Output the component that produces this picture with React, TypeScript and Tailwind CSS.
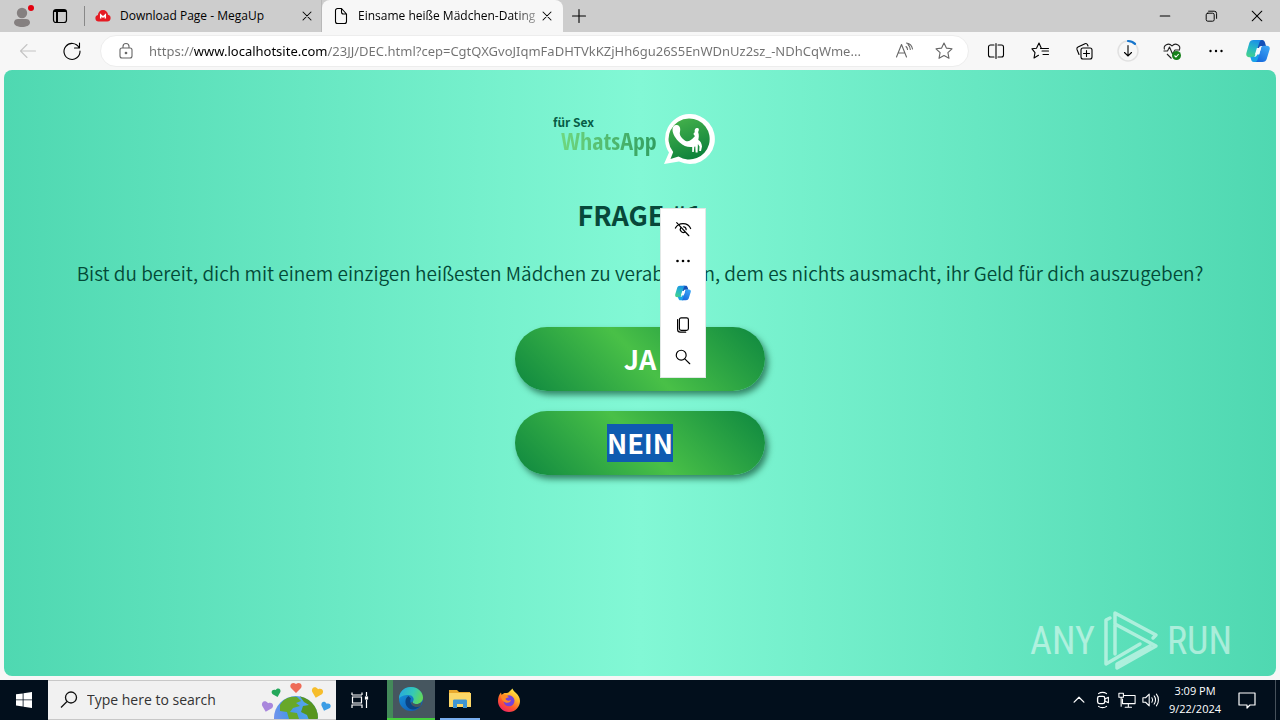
import type { ReactNode } from "react";

const UI_FONT = "font-['Open_Sans','Noto_Sans',sans-serif]";
const PAGE_FONT = "font-['Noto_Sans_CJK_SC','Noto_Sans',sans-serif]";
const NARROW_FONT = "font-['Open_Sans_Condensed','Roboto_Condensed','Liberation_Sans_Narrow',sans-serif]";
const LIGHT_NARROW_FONT = "font-['Roboto_Condensed','Liberation_Sans_Narrow','Open_Sans_Condensed',sans-serif]";

function Line({ size = 20, children, className = "" }: { size?: number; children: ReactNode; className?: string }) {
  return (
    <svg
      width={size}
      height={size}
      viewBox="0 0 20 20"
      fill="none"
      stroke="currentColor"
      strokeWidth="1.1"
      strokeLinecap="round"
      strokeLinejoin="round"
      className={`shrink-0 ${className}`}
      aria-hidden="true"
    >
      {children}
    </svg>
  );
}

function CopilotIcon({ size, id }: { size: number; id: string }) {
  return (
    <svg width={size} height={size} viewBox="0 0 24 24" aria-hidden="true" className="shrink-0">
      <defs>
        <linearGradient id={`${id}a`} x1="0.6" y1="0" x2="0.3" y2="1">
          <stop offset="0" stopColor="#1b8fe8" />
          <stop offset="0.5" stopColor="#27b9c4" />
          <stop offset="1" stopColor="#45d18c" />
        </linearGradient>
        <linearGradient id={`${id}b`} x1="0.8" y1="0" x2="0.2" y2="1">
          <stop offset="0" stopColor="#3ba5f5" />
          <stop offset="1" stopColor="#1668dc" />
        </linearGradient>
      </defs>
      <path d="M13 1h3.300c1.400 0 2.200 1 2.600 2.300L20 7h-4.800c-1.200 0-1.900.8-2.300 1.900L12 12 10.200 4C10.600 2 11.500 1 13 1z" fill="#1450b8" />
      <path d="M7.500 1H16c-1.400 0-2.100 1-2.600 2.500L9.300 16c-.5 1.500-1.200 2.200-2.700 2.200H3.300C.8 18.200-.2 16.300.4 14L3.300 4C3.900 2 5.300 1 7.500 1z" fill={`url(#${id}a)`} />
      <path d="M11 23H7.800c-1.400 0-2.200-1-2.600-2.300L4.300 17.800h4.300c1.200 0 2-.8 2.400-1.900L12 12l2.400 7.600C13.700 22 12.700 23 11 23z" fill="#1aa3e8" />
      <path d="M16.500 23H9c1.400 0 2.100-1 2.600-2.500L15.200 8.600c.4-1.200 1.100-1.900 2.500-1.900h3c2.500 0 3.500 1.600 2.900 3.900L20.700 20c-.6 2-2 3-4.200 3z" fill={`url(#${id}b)`} />
      <path d="M10.900 8.900h4.200l-2 6.500H8.900z" fill="#f7fbff" />
    </svg>
  );
}

function TabStrip() {
  return (
    <header className="flex h-8 items-stretch bg-[#cdcdcd] text-black">
      <div className="flex w-[84px] items-center gap-[26px] pl-3">
        <button aria-label="Profile" className="shrink-0">
          <svg width="22" height="24" viewBox="0 0 22 24" aria-hidden="true">
            <circle cx="10" cy="9" r="5.200" fill="#858080" />
            <path d="M2 18.500c0-2.500 2-3.500 4-3.500h8c2 0 4 1 4 3.500 0 3-4 4.500-8 4.500s-8-1.500-8-4.500z" fill="#858080" />
            <circle cx="19" cy="4" r="3" fill="#e3000f" />
          </svg>
        </button>
        <button aria-label="Tab actions" className="-ml-2 shrink-0">
          <svg width="16" height="16" viewBox="0 0 16 16" fill="none" stroke="#000" aria-hidden="true">
            <rect x="1.500" y="1.500" width="13" height="13" rx="2.500" strokeWidth="1.200" />
            <path d="M2 3h12M5 4v10" strokeWidth="2" />
          </svg>
        </button>
      </div>
      <div className="flex w-[238px] items-center border-r border-[#b8b8b8] pr-[6px]">
        <span className="mr-[10px] h-5 w-px bg-[#888]" />
        <svg width="16" height="14" viewBox="0 0 16 14" aria-hidden="true">
          <path d="M3.500 12.500a3.300 3.300 0 0 1-.6-6.500A5 5 0 0 1 8 1a5 5 0 0 1 5 4.800 3.400 3.400 0 0 1-.7 6.700z" fill="#e51b23" />
          <path d="M5.700 9.500V6l2.300 2 2.300-2v3.500" stroke="#fff" strokeWidth="1.500" fill="none" />
        </svg>
        <span className="ml-[9px] flex-1 truncate text-[12px] leading-4">Download Page - MegaUp</span>
        <button aria-label="Close Download Page">
          <Line size={16}><path d="m5 5 10 10M15 5 5 15" strokeWidth="1.300" /></Line>
        </button>
      </div>
      <div className="flex w-[241px] items-center rounded-t-lg bg-[#f7f7f7] pr-2 pl-3">
        <svg width="14" height="18" viewBox="0 0 14 18" fill="none" stroke="#000" strokeWidth="1.100" strokeLinejoin="round" aria-hidden="true" className="shrink-0">
          <path d="M1.500 3.500a2 2 0 0 1 2-2h4L12.500 7v7.500a2 2 0 0 1-2 2h-7a2 2 0 0 1-2-2zM7.500 1.500V5a2 2 0 0 0 2 2h3" />
        </svg>
        <span className="ml-[10px] bg-[linear-gradient(90deg,#000_155px,#999_176px)] bg-clip-text text-[12px] leading-4 whitespace-nowrap text-transparent">
          Einsame heiße Mädchen-Dating
        </span>
        <button aria-label="Close Einsame heiße Mädchen-Dating" className="ml-auto">
          <Line size={16}><path d="m5 5 10 10M15 5 5 15" strokeWidth="1.300" /></Line>
        </button>
      </div>
      <button aria-label="New tab" className="flex w-8 items-center justify-center">
        <Line size={20}><path d="M10 3.500v13M3.500 10h13" /></Line>
      </button>
      <div className="ml-auto flex">
        <button aria-label="Minimize" className="flex w-[46px] items-center justify-center"><Line size={16}><path d="M4 10h12" strokeWidth="1.300" /></Line></button>
        <button aria-label="Restore" className="flex w-[46px] items-center justify-center">
          <Line size={16}><rect x="4" y="6.500" width="10" height="10" rx="2" strokeWidth="1.200" /><path d="M7 4h7a3 3 0 0 1 3 3v6" strokeWidth="1.200" /></Line>
        </button>
        <button aria-label="Close" className="flex w-[46px] items-center justify-center"><Line size={16}><path d="m4 4 12 12M16 4 4 16" strokeWidth="1.300" /></Line></button>
      </div>
    </header>
  );
}

function Toolbar() {
  return (
    <nav className="flex h-[38px] items-center bg-[#f7f7f7] text-black">
      <button aria-label="Back" className="flex w-14 justify-center text-[#c4c4c4]">
        <Line><path d="M17.500 10h-15M9 3.500 2.500 10 9 16.500" /></Line>
      </button>
      <button aria-label="Refresh" className="flex w-8 justify-center">
        <Line><path d="M17 6.500A8 8 0 1 0 18 10M17.500 2v5h-5" /></Line>
      </button>
      <div className="ml-3 flex h-8 min-w-0 flex-1 items-center rounded-full border border-[#ededed] bg-white pr-[14px] pl-4">
        <svg width="18" height="18" viewBox="0 0 18 18" fill="none" stroke="#666" strokeWidth="1.100" aria-hidden="true" className="shrink-0">
          <rect x="3" y="6" width="12" height="10" rx="2" />
          <path d="M6 6V4.500a3 3 0 0 1 6 0V6" />
          <circle cx="9" cy="11" r=".8" fill="#666" />
        </svg>
        <input
          aria-label="Address"
          readOnly
          value="https://www.localhotsite.com/23JJ/DEC.html?cep=CgtQXGvoJIqmFaDHTVkKZjHh6gu26S5EnWDnUz2sz_-NDhCqWme..."
          className="ml-[14px] min-w-0 flex-1 bg-[linear-gradient(90deg,#717171_45px,#000_45px,#000_178px,#717171_178px)] bg-clip-text font-['Noto_Sans','Open_Sans',sans-serif] text-[13px] leading-5 text-transparent outline-none"
        />
        <button aria-label="Read aloud" className="mr-5 ml-3 text-[#666]">
          <Line><path d="M2.500 16 7.500 3.500 12.500 16M4.300 12h6.500M12 5.500c1 .8 1.500 1.800 1.500 3M14 3.500c1.500 1.200 2.300 2.800 2.300 5M12.500 2c3 .5 5.500 3 6 6" /></Line>
        </button>
        <button aria-label="Add to favorites" className="text-[#666]">
          <Line><path d="m10 2 2.400 5.100 5.600.7-4.100 3.900 1.100 5.600-5-2.800-5 2.800 1.100-5.600L2 7.800l5.600-.7z" /></Line>
        </button>
      </div>
      <div className="flex items-center pl-[5px]">
        <button aria-label="Split screen" className="flex w-11 justify-center">
          <Line><path d="M8 4H4.500a2 2 0 0 0-2 2v8a2 2 0 0 0 2 2H8M12 4h3.500a2 2 0 0 1 2 2v8a2 2 0 0 1-2 2H12M10 2.500v15" /></Line>
        </button>
        <button aria-label="Favorites" className="flex w-11 justify-center">
          <Line><path d="M8.500 14.300 4 17l1-5.300L2 7.800l4.500-.6L9 2l2.300 5.200 3 .3M12 10h6.500M10.500 7.500h8M13 13.500h5.500" /></Line>
        </button>
        <button aria-label="Collections" className="flex w-11 justify-center">
          <Line><rect x="7" y="7" width="11" height="11" rx="2" /><path d="M12.500 9.500v6M9.500 12.500h6M5 13.500l-2-5a2 2 0 0 1 1-2.500l7-3.300a2 2 0 0 1 2.500 1l.5 1.300" /></Line>
        </button>
        <button aria-label="Downloads" className="flex w-11 justify-center">
          <svg width="24" height="24" viewBox="0 0 24 24" fill="none" strokeLinecap="round" aria-hidden="true">
            <circle cx="12" cy="12" r="10" stroke="#e1e1e1" strokeWidth="1.500" />
            <path d="M12 2a10 10 0 0 1 7 2.900" stroke="#1675cc" strokeWidth="2.200" />
            <path d="M12 6.500v10M8.500 13.500l3.500 3.500 3.500-3.500" stroke="#000" strokeWidth="1.100" />
          </svg>
        </button>
        <button aria-label="Browser essentials" className="flex w-11 justify-center">
          <svg width="20" height="20" viewBox="0 0 20 20" fill="none" stroke="#222" strokeWidth="1.100" strokeLinejoin="round" aria-hidden="true">
            <path d="M2.500 8.500C1 4.500 6.500 1 10 5c3.500-4 9-.5 7.500 3.500M1.500 10h4l2-4 3 7 2.500-4h5M5 13l4.500 4.500" />
            <circle cx="14.500" cy="14.500" r="4.500" fill="#16801a" stroke="none" />
            <path d="m12.500 14.500 1.500 1.500 2.700-3" stroke="#fff" />
          </svg>
        </button>
        <button aria-label="Settings and more" className="flex w-11 justify-center">
          <svg width="20" height="20" viewBox="0 0 20 20" aria-hidden="true"><circle cx="4.500" cy="10" r="1.200" /><circle cx="10" cy="10" r="1.200" /><circle cx="15.500" cy="10" r="1.200" /></svg>
        </button>
        <button aria-label="Copilot" className="mr-[10px] ml-2"><CopilotIcon size={24} id="bar" /></button>
      </div>
    </nav>
  );
}

function Logo() {
  return (
    <div className="flex items-start pr-3">
      <div className="w-[110px]">
        <div className="text-[12px] leading-4 font-bold text-[#075c46]">für Sex</div>
        <div className={`bg-linear-to-r from-[#74dc82] to-[#2c9a5e] bg-clip-text pb-1 pl-2 text-[24px] leading-[22px] font-bold whitespace-nowrap text-transparent ${NARROW_FONT}`}>
          WhatsApp
        </div>
      </div>
      <svg width="52" height="52" viewBox="0 0 52 52" aria-hidden="true">
        <defs>
          <linearGradient id="bubble" x1="0.3" y1="0" x2="0.7" y2="1">
            <stop offset="0" stopColor="#43b04b" />
            <stop offset="1" stopColor="#0b7f3a" />
          </linearGradient>
        </defs>
        <path d="M26 0a25 25 0 1 1-10 47.500L1 50l5-11.500A25 25 0 0 1 26 0z" fill="#fff" />
        <path d="M26 4.500a20.500 20.500 0 1 1-10.500 38L7.500 45l2.700-7A20.500 20.500 0 0 1 26 4.500z" fill="url(#bubble)" />
        <path d="M9.500 15.500c0-3 2-5 4.500-4.500 2.800.5 3.800 3.500 3 6.500-.8 2.500.3 4.800 2.700 7.200 2.500 2.600 5.300 3.300 7.300 1.800 2-1.300 3.500-2.500 5-4.500-1.800-1-2-3-.2-3.700-.8-2.500.8-4.800 2.700-4.300 2 .4 1.500 2.500.6 4 1.200 3 .7 5.500.2 8 2.200 1.200 3.500 3.500 3.700 6.500l-1 4.500h-1.800l.3-4.500-1.600-2.500-.3 8.500h-2l-.3-6-1 .2-.5 5.300h-1.600v-5c-4.500.5-8.700-1-12.500-4.500-4.200-4-7.200-8.500-7.200-13z" fill="#fff" />
      </svg>
    </div>
  );
}

function SelectionMenu() {
  const item = "flex h-8 w-full items-center justify-center hover:bg-gray-100";
  return (
    <div role="toolbar" aria-label="Selection actions" className="absolute top-[138px] left-[calc(50%+20px)] w-[46px] border border-[#e2e8e6] bg-white py-1 text-black">
      <button aria-label="Hide menu" className={item}>
        <Line size={18}><path d="M1.500 9c2-3.500 5-5 8.500-5s7 2 8.500 5.500M3 3l13.500 14.500M7.500 8.500a3.500 3.500 0 0 0 4.500 5M10.500 7.500c1.800.2 3 1.500 3 3.200" strokeWidth="1.300" /></Line>
      </button>
      <button aria-label="More" className={item}>
        <svg width="18" height="18" viewBox="0 0 18 18" aria-hidden="true"><circle cx="3.500" cy="9" r="1.300" /><circle cx="9" cy="9" r="1.300" /><circle cx="14.500" cy="9" r="1.300" /></svg>
      </button>
      <button aria-label="Ask Copilot" className={item}><CopilotIcon size={16} id="menu" /></button>
      <button aria-label="Copy" className={item}>
        <Line size={18}><rect x="6" y="2" width="10" height="14" rx="2" strokeWidth="1.300" /><path d="M4 4v11a3 3 0 0 0 3 3h6" strokeWidth="1.300" /></Line>
      </button>
      <button aria-label="Search" className={item}>
        <Line size={18}><circle cx="8" cy="8" r="5.500" strokeWidth="1.300" /><path d="m12 12 5.500 5.500" strokeWidth="1.300" /></Line>
      </button>
    </div>
  );
}

function Watermark() {
  return (
    <div aria-label="ANY RUN" className={`absolute right-11 bottom-1 flex items-center gap-2 text-[38px] leading-[60px] text-white/50 ${LIGHT_NARROW_FONT}`}>
      <span>ANY</span>
      <svg width="56" height="62" viewBox="0 0 56 62" fill="none" stroke="#fff" strokeOpacity=".5" strokeWidth="3.500" strokeLinejoin="round" strokeLinecap="round" aria-hidden="true">
        <path d="M12 44V3l41 22-3 3M12 14l41 22-39 22v-4l33-18M7 8l-4 2v44l34-20" />
      </svg>
      <span>RUN</span>
    </div>
  );
}

function Page() {
  const button =
    "h-16 w-[250px] rounded-full bg-[linear-gradient(45deg,#0d8740,#49c047,#0d8740)] text-[27px] font-bold text-white shadow-[3px_4px_6px_rgba(0,60,30,0.6)]";
  return (
    <main className={`relative mx-1 mb-1 flex flex-1 flex-col items-center rounded-lg bg-[linear-gradient(90deg,#4fd8b1,#82f8d5_50%,#4fd8b1)] px-4 pt-11 text-[#034a37] ${PAGE_FONT}`}>
      <Logo />
      <h1 className="mt-[29px] text-[27px] leading-10 font-bold text-[#07483a]">FRAGE #1</h1>
      <p className="mt-[22px] text-center text-[19px] leading-8 font-[350]">
        Bist du bereit, dich mit einem einzigen heißesten Mädchen zu verabreden, dem es nichts ausmacht, ihr Geld für dich auszugeben?
      </p>
      <div className="mt-[38px] flex flex-col gap-5">
        <button className={button}>JA</button>
        <button className={button}>
          <span className="inline-block bg-[#0f5bb0] leading-[38px]">NEIN</span>
        </button>
      </div>
      <SelectionMenu />
      <Watermark />
    </main>
  );
}

function Heart({ fill }: { fill: string }) {
  return <path fill={fill} d="M6 11 1 6C-1 3 2-1 6 2c4-3 7 1 5 4z" />;
}

function Taskbar() {
  return (
    <footer className="flex h-10 items-stretch bg-[#020f1c] text-white">
      <button aria-label="Start" className="flex w-12 items-center justify-center">
        <svg width="16" height="16" viewBox="0 0 16 16" fill="#fff" aria-hidden="true">
          <path d="M0 2.300 6.700 1.400v6.100H0zM7.500 1.300 16 0v7.500H7.500zM0 8.300h6.700v6.100L0 13.500zM7.500 8.300H16V16l-8.500-1.300z" />
        </svg>
      </button>
      <label className="flex w-72 items-center border-y border-[#c8c8c8] bg-[#f1f1f1] pl-3 text-black">
        <svg width="18" height="18" viewBox="0 0 18 18" fill="none" stroke="#111" strokeWidth="1.300" aria-hidden="true" className="shrink-0">
          <circle cx="11" cy="6.500" r="5.500" />
          <path d="m7 10.500-6 6" />
        </svg>
        <input placeholder="Type here to search" aria-label="Search" className="ml-[9px] w-0 flex-1 bg-transparent text-[14px] leading-5 outline-none placeholder:text-[#333]" />
        <svg width="76" height="38" viewBox="0 0 76 38" className="shrink-0" aria-hidden="true">
          <defs>
            <linearGradient id="globe" x1="0" y1="0.8" x2="1" y2="0.5"><stop offset="0" stopColor="#7d92ee" /><stop offset=".4" stopColor="#4a96e8" /><stop offset="1" stopColor="#56a8ee" /></linearGradient>
            <clipPath id="disc"><circle cx="36" cy="37" r="22" /></clipPath>
          </defs>
          <circle cx="36" cy="37" r="22" fill="url(#globe)" />
          <g clipPath="url(#disc)" fill="#68a829">
            <path d="M20 24c4-7 10-9 17-8l4 4-5 2 4 3-7 2-3 4 7 1 2 6H29l-2-7-7-1z" />
            <path d="M39 14c10 1 18 9 20 20l-2 5h-8l-2-5-6-3 2-6 6-1-5-3z" fill="#57951f" />
          </g>
          <g transform="translate(30 1)"><Heart fill="#ee6b57" /></g>
          <g transform="translate(12 7) rotate(-15 6 6) scale(.8)"><Heart fill="#25a85b" /></g>
          <g transform="translate(51 6) rotate(15 6 6)"><Heart fill="#f6bd2b" /></g>
          <g transform="translate(1 20) rotate(15 6 6)"><Heart fill="#a987dc" /></g>
          <g transform="translate(60 21) rotate(20 6 6) scale(.85)"><Heart fill="#3c9de5" /></g>
        </svg>
      </label>
      <button aria-label="Task view" className="flex w-[51px] items-center justify-center pr-1">
        <svg width="18" height="18" viewBox="0 0 18 18" fill="none" stroke="#fff" strokeWidth="1.200" aria-hidden="true">
          <path d="M1 4V1.500M11 4V1.500M1 4h10M1.500 6h9v6h-9zM1 17v-3h10v3M15.500 1v4M15.500 9v8" /><rect x="14.500" y="6" width="2" height="2" fill="#fff" />
        </svg>
      </button>
      <button aria-label="Microsoft Edge" className="flex w-12 items-center justify-center border-b-2 border-[#45cf3e] bg-[linear-gradient(90deg,#43895a_6px,#46565f_6px)]">
        <svg width="26" height="26" viewBox="0 0 26 26" aria-hidden="true">
          <defs>
            <linearGradient id="edgeTop" x1="0" y1="0.3" x2="1" y2="0.6"><stop offset="0" stopColor="#27a8df" /><stop offset=".55" stopColor="#35c9b5" /><stop offset="1" stopColor="#65d954" /></linearGradient>
            <linearGradient id="edgeLow" x1="0" y1="0" x2="0.8" y2="1"><stop offset="0" stopColor="#159ce2" /><stop offset="1" stopColor="#1257b0" /></linearGradient>
          </defs>
          <circle cx="13" cy="13" r="12" fill="url(#edgeLow)" />
          <path d="M1 13C1 5.500 6.500 1 13 1s12 5 12 10.500c0 4-3 6.500-6.500 6.500-3 0-4.500-1-3.500-2.500 2-3-.5-6.500-4.500-6.500C6 9 2.500 10 1 13z" fill="url(#edgeTop)" />
          <path d="M10.500 10C7 12 6.500 17 9 20.500c3 4 9 4 13.500-.5 0 0-3.500 1.500-6.500 0-3.500-1.700-4.500-5-3-7.500z" fill="#0b4484" />
          <path d="M15 15.500c-1 1.500.5 2.500 3.500 2.500 2 0 4-.8 5.200-2.300L22.500 20c-3 2-9 1-9.500-3.500z" fill="#46565f" />
        </svg>
      </button>
      <button aria-label="File Explorer" className="mx-[5px] flex w-10 items-center justify-center border-b-2 border-[#78aef0]">
        <svg width="24" height="22" viewBox="0 0 24 22" aria-hidden="true">
          <path d="M1 2h8l2 2h11v6H1z" fill="#e9a92e" />
          <path d="M1 5h22v14H1z" fill="#fbd667" />
          <path d="M5 20v-7c0-1 .5-1.500 1.500-1.500h11c1 0 1.500.5 1.500 1.500v7h-4v-4H9v4z" fill="#3e95d4" />
        </svg>
      </button>
      <button aria-label="Firefox" className="flex w-12 items-center justify-center">
        <svg width="24" height="24" viewBox="0 0 24 24" aria-hidden="true">
          <defs>
            <linearGradient id="fox" x1="0.8" y1="0" x2="0.2" y2="1"><stop offset="0" stopColor="#fff24a" /><stop offset=".35" stopColor="#ffb02a" /><stop offset=".65" stopColor="#ff5a2b" /><stop offset="1" stopColor="#ee1c6b" /></linearGradient>
          </defs>
          <path d="M15.500.5c.5 2 2 3 3.500 4.500 2.500 2 4 5 4 8A11 11 0 0 1 1 13c0-3.500 1-6.500 3-8.500l.7 2.700C6 5.500 7 5 8.500 5c2 0 3-.5 4-1.500 1-1 2-2 3-3z" fill="url(#fox)" />
          <circle cx="12" cy="12.800" r="5.500" fill="#7542d9" />
          <path d="M4 7c3-1 6 0 8 2.500-2 0-3 .5-3.500 1.500 1 2 3.500 2 5.500 1-.5 3-5 4-8 1C4.500 11.500 4 9 4 7z" fill="#ff8a24" />
        </svg>
      </button>
      <div className="ml-auto flex items-center">
        <button aria-label="Show hidden icons" className="flex w-6 justify-center"><Line size={14}><path d="m3 13 7-7 7 7" strokeWidth="1.800" /></Line></button>
        <button aria-label="Camera" className="flex w-6 justify-center">
          <Line size={18}><rect x="4" y="6" width="8" height="8" rx="2" strokeWidth="1.500" /><path d="m12 9 4-2v6l-4-2M5 3c2.500-2 6.500-2 9 0M5 17c2.500 2 6.500 2 9 0" strokeWidth="1.200" /></Line>
        </button>
        <button aria-label="Network" className="flex w-6 justify-center">
          <Line size={18}><path d="M6 5h13v9H5V9M11.500 14v4M8 18h7M1 2.500h5V7H1zM3.500 7v10" strokeWidth="1.200" /></Line>
        </button>
        <button aria-label="Volume" className="flex w-6 justify-center">
          <Line size={18}><path d="M1 7.500h3l4-4v13l-4-4H1zM11 7.500c1 1.500 1 3.500 0 5M13.500 5.500c2 2.500 2 6.500 0 9M16 3.500c3 3.500 3 9.500 0 13" strokeWidth="1.200" /></Line>
        </button>
        <div className="w-16 text-center text-[11px] leading-[18px]"><div>3:09 PM</div><div>9/22/2024</div></div>
        <button aria-label="Notifications" className="flex w-10 justify-center">
          <Line size={20}><path d="M2 3h16v12h-5l-3 3v-3H2z" strokeWidth="1.200" /></Line>
        </button>
        <span className="mr-1 ml-2 h-10 w-px bg-[#46515b]" />
      </div>
    </footer>
  );
}

export default function App() {
  return (
    <div className={`flex min-h-screen flex-col bg-[#f7f7f7] ${UI_FONT}`}>
      <TabStrip />
      <Toolbar />
      <Page />
      <Taskbar />
    </div>
  );
}
